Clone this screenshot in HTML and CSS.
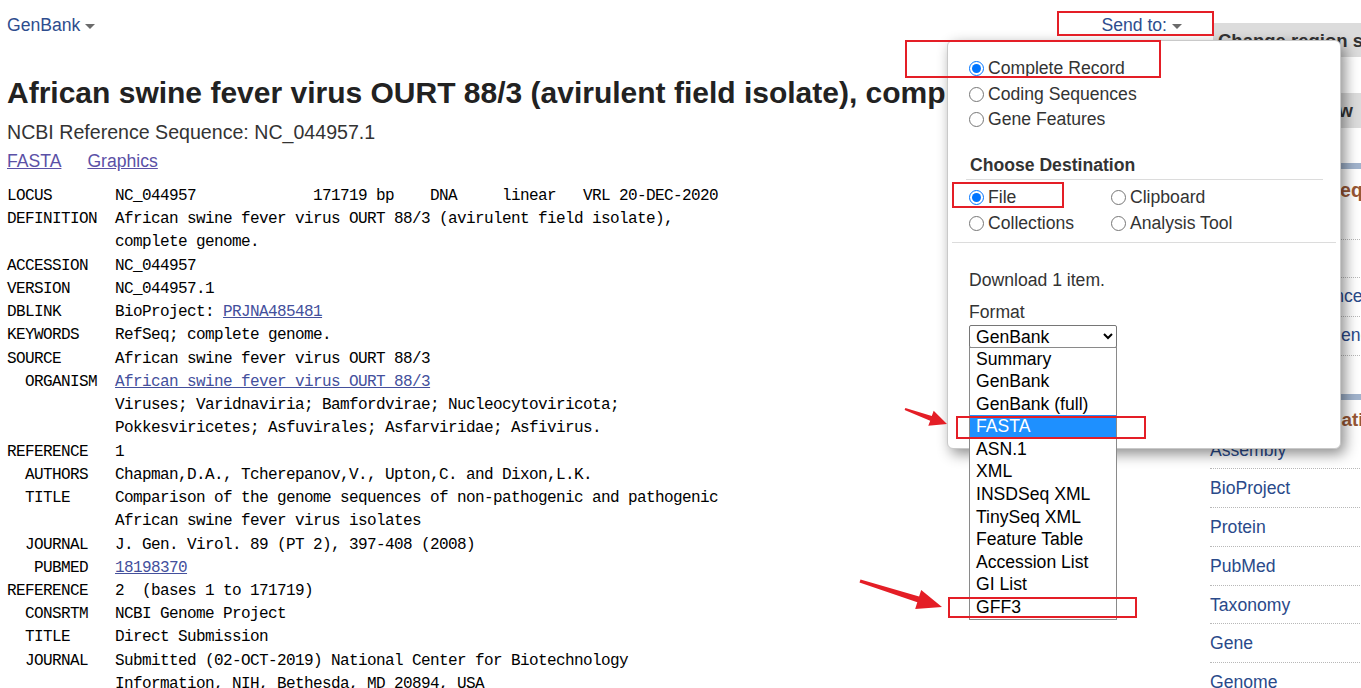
FILE: index.html
```html
<!DOCTYPE html>
<html lang="en">
<head>
<meta charset="utf-8">
<title>African swine fever virus OURT 88/3 - Nucleotide - NCBI</title>
<link rel="stylesheet" href="styles.css">
</head>
<body>
<div class="page">
  <main class="content">
    <div class="topbar">
      <a class="db-menu" href="#">GenBank<span class="caret"></span></a>
      <a class="send-to" href="#">Send to:<span class="caret"></span></a>
    </div>
    <h1 class="title">African swine fever virus OURT 88/3 (avirulent field isolate), complete genome</h1>
    <p class="refseq">NCBI Reference Sequence: NC_044957.1</p>
    <p class="views"><a href="#">FASTA</a><a href="#">Graphics</a></p>
    <div class="record">
      <div class="ln">LOCUS       NC_044957             171719 bp    DNA     linear   VRL 20-DEC-2020</div>
      <div class="ln">DEFINITION  African swine fever virus OURT 88/3 (avirulent field isolate),</div>
      <div class="ln">            complete genome.</div>
      <div class="ln">ACCESSION   NC_044957</div>
      <div class="ln">VERSION     NC_044957.1</div>
      <div class="ln"><span>DBLINK      BioProject: </span><a href="#">PRJNA485481</a></div>
      <div class="ln">KEYWORDS    RefSeq; complete genome.</div>
      <div class="ln">SOURCE      African swine fever virus OURT 88/3</div>
      <div class="ln"><span>  ORGANISM  </span><a href="#">African swine fever virus OURT 88/3</a></div>
      <div class="ln">            Viruses; Varidnaviria; Bamfordvirae; Nucleocytoviricota;</div>
      <div class="ln">            Pokkesviricetes; Asfuvirales; Asfarviridae; Asfivirus.</div>
      <div class="ln">REFERENCE   1</div>
      <div class="ln">  AUTHORS   Chapman,D.A., Tcherepanov,V., Upton,C. and Dixon,L.K.</div>
      <div class="ln">  TITLE     Comparison of the genome sequences of non-pathogenic and pathogenic</div>
      <div class="ln">            African swine fever virus isolates</div>
      <div class="ln">  JOURNAL   J. Gen. Virol. 89 (PT 2), 397-408 (2008)</div>
      <div class="ln"><span>   PUBMED   </span><a href="#">18198370</a></div>
      <div class="ln">REFERENCE   2  (bases 1 to 171719)</div>
      <div class="ln">  CONSRTM   NCBI Genome Project</div>
      <div class="ln">  TITLE     Direct Submission</div>
      <div class="ln">  JOURNAL   Submitted (02-OCT-2019) National Center for Biotechnology</div>
      <div class="ln">            Information, NIH, Bethesda, MD 20894, USA</div>
    </div>
  </main>
  <aside class="sidebar">
    <div class="sb-box">Change region shown</div>
    <div class="sb-box sb-box-2">Customize view</div>
    <section class="portlet portlet-analyze">
      <h3>Analyze this sequence</h3>
      <ul>
        <li><a href="#">Run BLAST</a></li>
        <li><a href="#">Pick Primers</a></li>
        <li><a href="#">Highlight Sequence Features</a></li>
        <li><a href="#">Find in this Sequence</a></li>
      </ul>
    </section>
    <section class="portlet portlet-related">
      <h3>Related information</h3>
      <ul>
        <li><a href="#">Assembly</a></li>
        <li><a href="#">BioProject</a></li>
        <li><a href="#">Protein</a></li>
        <li><a href="#">PubMed</a></li>
        <li><a href="#">Taxonomy</a></li>
        <li><a href="#">Gene</a></li>
        <li><a href="#">Genome</a></li>
      </ul>
    </section>
  </aside>
</div>

<div class="popup">
  <div class="choices">
    <label class="radio-row"><input type="radio" name="rec" checked>Complete Record</label>
    <label class="radio-row"><input type="radio" name="rec">Coding Sequences</label>
    <label class="radio-row"><input type="radio" name="rec">Gene Features</label>
  </div>
  <div class="dest">
    <h4>Choose Destination</h4>
    <div class="dest-grid">
      <label class="radio-row"><input type="radio" name="dst" checked>File</label>
      <label class="radio-row"><input type="radio" name="dst">Clipboard</label>
      <label class="radio-row"><input type="radio" name="dst">Collections</label>
      <label class="radio-row"><input type="radio" name="dst">Analysis Tool</label>
    </div>
  </div>
  <div class="download">
    <p class="dl-count">Download 1 item.</p>
    <p class="dl-label">Format</p>
    <div class="format-field">
      <select class="format-select"><option>GenBank</option></select>
      <ul class="dropdown">
        <li>Summary</li>
        <li>GenBank</li>
        <li>GenBank (full)</li>
        <li class="selected">FASTA</li>
        <li>ASN.1</li>
        <li>XML</li>
        <li>INSDSeq XML</li>
        <li>TinySeq XML</li>
        <li>Feature Table</li>
        <li>Accession List</li>
        <li>GI List</li>
        <li>GFF3</li>
      </ul>
    </div>
  </div>
</div>

<svg class="annotations" width="1361" height="688" viewBox="0 0 1361 688" aria-hidden="true">
  <g fill="none" stroke="#e41e26" stroke-width="2">
    <rect x="1058" y="12" width="155" height="23"/>
    <rect x="906" y="41" width="254" height="36"/>
    <rect x="953" y="183" width="110" height="24"/>
    <rect x="957" y="417" width="188" height="21"/>
    <rect x="949" y="598" width="187" height="19"/>
  </g>
  <g fill="#e41e26">
    <polygon points="904.6,410.1 930.2,420.7 928.3,425.8 947,424 933.7,410.8 931.8,415.9 905.4,407.9"/>
    <polygon points="859.5,582.4 917.3,602.3 915.2,609 942,607 921.2,589.9 919.1,596.6 860.5,579.6"/>
  </g>
</svg>
</body>
</html>
```

FILE: styles.css
```css
html, body {
  margin: 0;
  padding: 0;
  background: #fff;
}

body {
  width: 1361px;
  height: 688px;
  overflow: hidden;
  position: relative;
  font-family: "Liberation Sans", Arial, sans-serif;
  font-size: 17.6px;
  color: #333;
}

a {
  text-decoration: none;
}

.page {
  display: grid;
  grid-template-columns: 1210px 260px;
}

/* ---------- main content ---------- */
.content {
  padding-left: 7px;
  min-width: 0;
}

.topbar {
  height: 50px;
  box-sizing: border-box;
  padding: 15px 28px 0 0;
  display: flex;
  justify-content: space-between;
  align-items: flex-start;
  line-height: 21px;
}

.db-menu,
.send-to {
  color: #2e4d8e;
  font-size: 17.6px;
}

.caret {
  display: inline-block;
  width: 0;
  height: 0;
  margin-left: 5px;
  vertical-align: 2px;
  border-left: 5px solid transparent;
  border-right: 5px solid transparent;
  border-top: 5px solid #6b6b6b;
}

.title {
  margin: 25px 0 0;
  font-size: 30px;
  line-height: 36px;
  font-weight: bold;
  color: #222;
  white-space: nowrap;
}

.refseq {
  margin: 9px 0 0;
  font-size: 19.6px;
  line-height: 24px;
  color: #333;
}

.views {
  margin: 6px 0 0;
  line-height: 22px;
  display: flex;
  gap: 26px;
}

.views a {
  color: #5b50a6;
  text-decoration: underline;
  font-size: 17.6px;
}

.record {
  margin: 13px 0 0;
  font-family: "Liberation Mono", "Courier New", monospace;
  font-size: 16px;
  letter-spacing: -0.6px;
  color: #000;
}

.record .ln {
  height: 23.24px;
  line-height: 23.24px;
  white-space: pre;
}

.record a {
  color: #44509c;
  text-decoration: underline;
}

/* ---------- sidebar ---------- */
.sidebar {
  font-size: 17.6px;
}

.sb-box {
  margin: 23px 0 0 3px;
  height: 34px;
  line-height: 36px;
  padding-left: 5px;
  background: #dcdcdc;
  color: #333;
  font-size: 18.5px;
  font-weight: bold;
  white-space: nowrap;
}

.sb-box-2 {
  margin-top: 36px;
  height: 35px;
  line-height: 35px;
  padding-left: 1px;
}

.portlet {
  border-top: 6px solid #a1b3cc;
}

.portlet-analyze {
  margin-top: 35px;
}

.portlet-related {
  margin-top: 38px;
}

.portlet h3 {
  margin: 0;
  padding: 11px 0 1px;
  line-height: 20px;
  font-size: 19.5px;
  font-weight: bold;
  color: #985735;
  white-space: nowrap;
}

.portlet-related h3 {
  padding-top: 10px;
  font-size: 18.8px;
}

.portlet ul {
  list-style: none;
  margin: 0;
  padding: 0;
}

.portlet li {
  height: 37.7px;
  line-height: 37.7px;
  border-bottom: 1px dotted #b8b8b8;
  white-space: nowrap;
}

.portlet-related li {
  line-height: 39.7px;
}

.portlet li a {
  color: #2a4a8a;
}

/* ---------- send-to popup ---------- */
.popup {
  position: absolute;
  left: 947px;
  top: 40px;
  width: 394px;
  height: 409px;
  box-sizing: border-box;
  padding: 0 4px;
  background: #fff;
  border: 1px solid #c9c9c9;
  border-radius: 6px;
  box-shadow: 4px 5px 14px rgba(0, 0, 0, 0.45);
  color: #333;
  font-size: 17.6px;
}

.radio-row {
  display: flex;
  align-items: center;
  height: 25.5px;
  white-space: nowrap;
}

.radio-row input {
  width: 15px;
  height: 15px;
  margin: 0 4px 0 0;
  flex: none;
}

.choices {
  padding: 15px 0 0 17px;
}

.dest {
  margin: 0 13px 0 14px;
}

.dest h4 {
  margin: 21px 0 0;
  padding: 0 0 3px 4px;
  line-height: 22px;
  font-size: 17.6px;
  font-weight: bold;
  border-bottom: 1px solid #dcdcdc;
}

.dest-grid {
  margin-top: 5px;
  padding-left: 3px;
  display: grid;
  grid-template-columns: 142px 1fr;
}

.dest-grid .radio-row {
  height: 26px;
}

.download {
  margin-top: 5px;
  border-top: 1px solid #dcdcdc;
  padding-left: 17px;
}

.dl-count {
  margin: 26px 0 0;
  line-height: 22px;
}

.dl-label {
  margin: 10px 0 0;
  line-height: 22px;
}

.format-field {
  position: relative;
  margin-top: 2px;
  width: 148px;
}

.format-select {
  display: block;
  width: 148px;
  height: 23px;
  box-sizing: border-box;
  padding: 0 2px;
  font-family: "Liberation Sans", Arial, sans-serif;
  font-size: 17.6px;
  color: #000;
  background: #fff;
  border: 1px solid #767676;
  border-radius: 2px;
}

.dropdown {
  position: absolute;
  left: 0;
  top: 22px;
  width: 148px;
  box-sizing: border-box;
  margin: 0;
  padding: 0;
  list-style: none;
  background: #fff;
  border: 1px solid #8a8a8a;
  color: #000;
  font-size: 17.6px;
  z-index: 2;
}

.dropdown li {
  height: 22.6px;
  line-height: 22.6px;
  padding-left: 6px;
  white-space: nowrap;
}

.dropdown li.selected {
  background: #1e90ff;
  color: #fff;
}

/* ---------- screenshot annotations ---------- */
.annotations {
  position: absolute;
  left: 0;
  top: 0;
  z-index: 5;
  pointer-events: none;
}
```
